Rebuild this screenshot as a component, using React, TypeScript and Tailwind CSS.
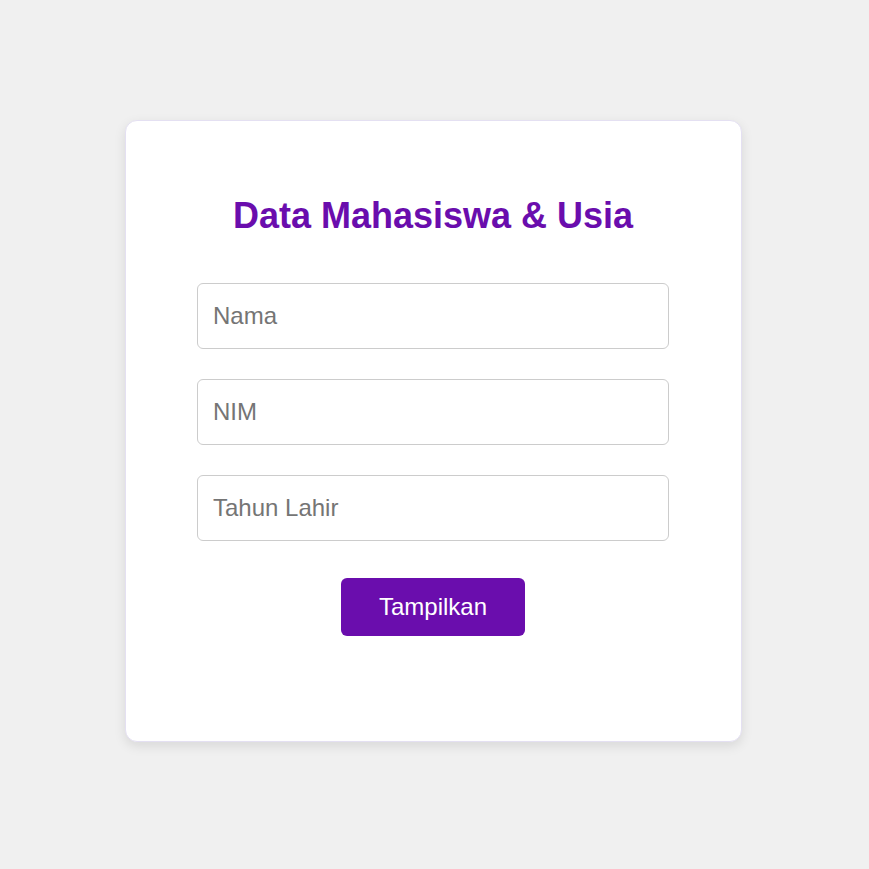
export default function App() {
  return (
    <div
      className="h-screen w-full bg-[#f0f0f0] flex items-center justify-center pb-[8px] pr-[3px]"
      style={{ fontFamily: '"Liberation Sans", Arial, sans-serif' }}
    >
      <div className="w-[617px] h-[622px] bg-white rounded-[12px] border border-[#e4e0f2] shadow-[0_4px_12px_rgba(0,0,0,0.1)] flex flex-col items-center pt-[74px]">
        <h1 className="text-[36px] leading-[41px] font-bold text-[#6a0dad]">Data Mahasiswa &amp; Usia</h1>
        <div className="flex flex-col gap-[30px] mt-[47px] w-[472px]">
          <input
            placeholder="Nama"
            className="h-[66px] w-full border border-[#cccccc] rounded-[6px] px-[15px] text-[24px] text-black placeholder:text-[#757575] outline-none"
          />
          <input
            placeholder="NIM"
            className="h-[66px] w-full border border-[#cccccc] rounded-[6px] px-[15px] text-[24px] text-black placeholder:text-[#757575] outline-none"
          />
          <input
            placeholder="Tahun Lahir"
            className="h-[66px] w-full border border-[#cccccc] rounded-[6px] px-[15px] text-[24px] text-black placeholder:text-[#757575] outline-none"
          />
        </div>
        <button className="mt-[37px] w-[184px] h-[58px] bg-[#6a0dad] text-white text-[24px] rounded-[6px]">
          Tampilkan
        </button>
      </div>
    </div>
  );
}
